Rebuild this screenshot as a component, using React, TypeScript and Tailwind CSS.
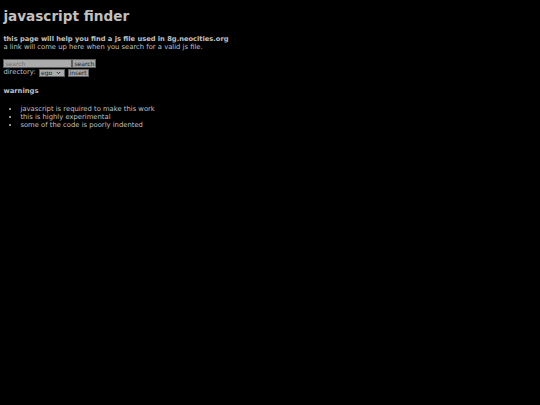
import React from "react";

const items = [
  "javascript is required to make this work",
  "this is highly experimental",
  "some of the code is poorly indented",
];

export default function App() {
  return (
    <div className="min-h-[405px] w-full bg-black px-[3.4px] pt-[9.1px] font-['DejaVu_Sans',sans-serif] text-[6.8px] leading-[7.9px] text-[#c0c0c0]">
      <h1 className="text-[13.6px] font-bold leading-[15.8px]">javascript finder</h1>

      <p className="mt-[11px]">
        <b className="text-[6.7px]">this page will help you find a js file used in 8g.neocities.org</b>
        <br />
        a link will come up here when you search for a valid js file.
      </p>

      <div className="mt-[7.6px] flex flex-col gap-[0.8px] text-[6px] leading-[7px]">
        <div className="flex items-center">
          <input
            placeholder="search"
            className="h-[8.6px] w-[69px] border-[0.8px] border-[#5e5e5e] bg-[#ababab] px-[1px] text-[6px] text-[#222] outline-none placeholder:text-[#707070]"
          />
          <button className="h-[8.6px] w-[24px] border-[0.8px] border-[#5e5e5e] bg-[#a6a6a6] text-[6px] leading-none text-[#202020]">
            search
          </button>
        </div>
        <div className="flex items-center text-[6.8px]">
          <span>directory:</span>
          <span className="ml-[3px] flex h-[8.6px] w-[26px] items-center justify-between border-[0.8px] border-[#5e5e5e] bg-[#ababab] px-[1.5px] text-[6px] text-[#202020]">
            ego
            <svg width="5" height="4" viewBox="0 0 10 8" className="mr-[1px]">
              <path d="M1.5 2 L5 5.5 L8.5 2" fill="none" stroke="#202020" strokeWidth="1.8" />
            </svg>
          </span>
          <button className="ml-[3px] h-[8.6px] w-[21px] border-[0.8px] border-[#5e5e5e] bg-[#a6a6a6] text-[6px] leading-none text-[#202020]">
            insert
          </button>
        </div>
      </div>

      <h4 className="mt-[10.6px] font-bold">warnings</h4>

      <ul className="mt-[10px] list-disc pl-[17px]">
        {items.map((t) => (
          <li key={t}>{t}</li>
        ))}
      </ul>
    </div>
  );
}
